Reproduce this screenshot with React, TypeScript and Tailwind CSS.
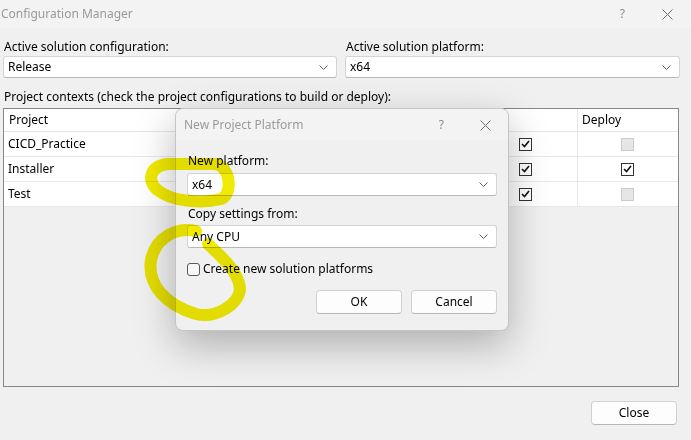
import React from "react";

const Chevron = () => (
  <svg width="9" height="5" viewBox="0 0 9 5" className="shrink-0">
    <path d="M0.5 0.5 L4.5 4.5 L8.5 0.5" fill="none" stroke="#606060" strokeWidth="1" />
  </svg>
);

const Select = ({ value, className = "" }: { value: string; className?: string }) => (
  <div
    className={`flex items-center justify-between bg-white border border-[#d4d4d4] border-b-[#b8b8b8] rounded-[3px] pl-[4px] pr-[8px] ${className}`}
  >
    <span className="text-[12px] text-black leading-none">{value}</span>
    <Chevron />
  </div>
);

const CloseX = ({ color = "#707070" }: { color?: string }) => (
  <svg width="11" height="11" viewBox="0 0 11 11">
    <path d="M0.5 0.5 L10.5 10.5 M10.5 0.5 L0.5 10.5" stroke={color} strokeWidth="1" fill="none" />
  </svg>
);

const TableCheck = ({ checked, disabled }: { checked?: boolean; disabled?: boolean }) =>
  disabled ? (
    <div className="w-[13px] h-[13px] bg-[#e6e6e6] border border-[#cbcbcb]" />
  ) : (
    <div className="w-[13px] h-[13px] bg-white border border-[#333333] flex items-center justify-center">
      {checked && (
        <svg width="9" height="8" viewBox="0 0 9 8">
          <path d="M1 4 L3.5 6.5 L8 1" fill="none" stroke="#111" strokeWidth="1.6" />
        </svg>
      )}
    </div>
  );

const Button = ({ label, className = "" }: { label: string; className?: string }) => (
  <div
    className={`flex items-center justify-center bg-[#fdfdfd] border border-[#d0d0d0] border-b-[#b5b5b5] rounded-[4px] text-[12px] text-black ${className}`}
  >
    {label}
  </div>
);

const rows = [
  { name: "CICD_Practice", deploy: false },
  { name: "Installer", deploy: true },
  { name: "Test", deploy: false },
];

export default function App() {
  return (
    <div
      className="relative w-[691px] h-[440px] overflow-hidden bg-[#f0f0f0] text-black"
      style={{ fontFamily: '"Noto Sans", "Open Sans", sans-serif' }}
    >
      {/* Title bar */}
      <div className="h-[28px] bg-[#f3f3f3] flex items-center justify-between">
        <span className="text-[12px] text-[#9a9a9a] pl-[1px]">Configuration Manager</span>
        <div className="flex items-center">
          <span className="text-[12px] text-[#8a8a8a] mr-[37px]">?</span>
          <div className="mr-[18px] mt-[1px]">
            <CloseX color="#6e6e6e" />
          </div>
        </div>
      </div>

      {/* Content */}
      <div className="px-[3px]">
        <div className="flex gap-[8px] pt-[9px]">
          <div className="w-[334px]">
            <div className="text-[12px] pl-[1px] h-[19px] leading-[19px]">Active solution configuration:</div>
            <Select value="Release" className="h-[22px]" />
          </div>
          <div className="w-[335px]">
            <div className="text-[12px] pl-[1px] h-[19px] leading-[19px]">Active solution platform:</div>
            <Select value="x64" className="h-[22px]" />
          </div>
        </div>

        <div className="text-[12px] pl-[1px] mt-[9px] h-[19px] leading-[19px]">
          Project contexts (check the project configurations to build or deploy):
        </div>

        {/* Table */}
        <div className="mt-[2px] w-[676px] h-[279px] border border-[#828790] bg-[#f0f0f0]">
          <div className="flex h-[23px] bg-white border-b border-[#e5e5e5] text-[12px]">
            <div className="w-[202px] pl-[5px] flex items-center">Project</div>
            <div className="w-[130px] border-l border-[#e5e5e5]" />
            <div className="w-[130px] border-l border-[#e5e5e5]" />
            <div className="w-[111px] border-l border-[#e5e5e5]" />
            <div className="flex-1 pl-[4px] flex items-center border-l border-[#e5e5e5]">Deploy</div>
          </div>
          {rows.map((r) => (
            <div key={r.name} className="flex h-[25px] bg-white border-b border-[#e8e8e8] text-[12px]">
              <div className="w-[202px] pl-[4px] flex items-center">{r.name}</div>
              <div className="w-[130px] border-l border-[#e8e8e8]" />
              <div className="w-[130px] border-l border-[#e8e8e8]" />
              <div className="w-[111px] flex items-center pl-[52px] border-l border-[#e8e8e8]">
                <TableCheck checked />
              </div>
              <div className="flex-1 flex items-center justify-center border-l border-[#e8e8e8] pr-[2px]">
                <TableCheck checked={r.deploy} disabled={!r.deploy} />
              </div>
            </div>
          ))}
        </div>

        <div className="flex justify-end mt-[14px] pr-[11px]">
          <Button label="Close" className="w-[86px] h-[24px]" />
        </div>
      </div>

      {/* Dialog */}
      <div className="absolute left-[175px] top-[108px] w-[334px] h-[223px] rounded-[8px] border border-[#c4c4c4] bg-[#f0f0f0] shadow-[0_14px_40px_rgba(0,0,0,0.28)] overflow-hidden">
        <div className="h-[31px] bg-[#f3f3f3] flex items-center justify-between">
          <span className="text-[12px] text-[#9a9a9a] pl-[8px]">New Project Platform</span>
          <div className="flex items-center">
            <span className="text-[12px] text-[#8a8a8a] mr-[36px]">?</span>
            <div className="mr-[17px] mt-[1px]">
              <CloseX color="#6e6e6e" />
            </div>
          </div>
        </div>
        <div className="px-[11px] pt-[12px]">
          <div className="text-[12px] h-[18px] leading-[18px] pl-[1px]">New platform:</div>
          <Select value="x64" className="h-[23px] mt-[3px] pl-[3px]" />
          <div className="text-[12px] h-[18px] leading-[18px] pl-[1px] mt-[9px]">Copy settings from:</div>
          <Select value="Any CPU" className="h-[23px] mt-[2px]" />
          <div className="flex items-center mt-[13px] h-[16px]">
            <div className="w-[13px] h-[13px] rounded-[3px] border border-[#5a5a5a] bg-[#f7f7f7]" />
            <span className="text-[12px] ml-[3px]">Create new solution platforms</span>
          </div>
          <div className="flex justify-end gap-[9px] mt-[13px]">
            <Button label="OK" className="w-[86px] h-[24px]" />
            <Button label="Cancel" className="w-[86px] h-[24px]" />
          </div>
        </div>
      </div>

      {/* Yellow annotations */}
      <svg className="absolute left-0 top-0 pointer-events-none mix-blend-multiply" width="691" height="440">
        <path
          d="M159 191 C147 183 148 167 167 164 L215 164 C231 166 233 195 221 199 C201 204 171 201 159 191"
          fill="none"
          stroke="#f2ea00"
          strokeWidth="12"
          strokeLinecap="round"
        />
        <path
          d="M196 231 C178 227 156 236 151 260 C147 285 166 305 196 314 C216 319 240 304 240 288 C238 272 224 259 208 244"
          fill="none"
          stroke="#f2ea00"
          strokeWidth="12"
          strokeLinecap="round"
        />
      </svg>
    </div>
  );
}
